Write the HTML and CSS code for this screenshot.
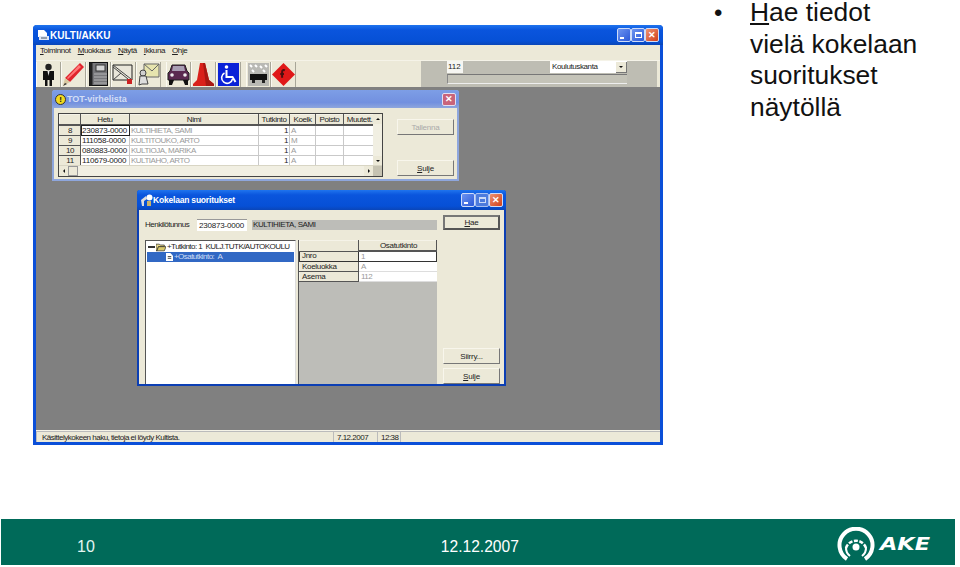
FILE: index.html
```html
<!DOCTYPE html>
<html>

<head>
  <meta charset="utf-8">
  <title>Hae tiedot</title>
  <link rel="stylesheet" href="styles.css">
</head>

<body>
  <div class="slide">
    <div class="content">
      <div class="app">
        <div class="titlebar">
          <svg class="title-icon" width="12" height="13" viewBox="0 0 12 13"><path d="M1 1h6l3 3v4H1z" fill="#fff"/><path d="M2 7h10v4H2z" fill="#dfe6f5"/><path d="M4 9h6" stroke="#456"/></svg>
          <span class="title-text">KULTI/AKKU</span>
          <div class="winbtns">
            <span class="winbtn"><i class="min"></i></span>
            <span class="winbtn"><i class="max"></i></span>
            <span class="winbtn close">✕</span>
          </div>
        </div>
        <div class="menubar">
          <span><u>T</u>oiminnot</span>
          <span><u>M</u>uokkaus</span>
          <span><u>N</u>äytä</span>
          <span><u>I</u>kkuna</span>
          <span><u>O</u>hje</span>
        </div>
        <div class="toolbar">
          <div class="tools">
            <!-- person -->
            <span class="tool"><svg width="23" height="25" viewBox="0 0 23 25"><circle cx="11.500" cy="5" r="3.200" fill="#222"/><path d="M6 9h11v9h-2v6h-2.500v-6h-2v6H8v-6H6z" fill="#111"/><path d="M10.500 9h2l-1 5z" fill="#eee"/></svg></span>
            <!-- pencil -->
            <span class="tool"><svg width="23" height="25" viewBox="0 0 23 25"><path d="M18 1l4 4L8 20l-5-4z" fill="#e0242c"/><path d="M3 16l5 4-7 4z" fill="#d8c8a0"/><path d="M1 24l2-3 2 1z" fill="#333"/><path d="M17 3l2 2L6 17l-1-1z" fill="#f77"/></svg></span>
            <!-- notebook -->
            <span class="tool"><svg width="23" height="25" viewBox="0 0 23 25"><rect x="2.500" y=".5" width="18" height="23" fill="#77777a" stroke="#111"/><rect x="2.500" y=".5" width="3" height="23" fill="#222"/><rect x="9" y="3" width="9" height="6" fill="#d4d4d4" stroke="#333"/><path d="M7 12h13M7 15h13M7 18h13M7 21h13" stroke="#b5b5b5"/></svg></span>
            <!-- letter -->
            <span class="tool"><svg width="23" height="25" viewBox="0 0 23 25"><path d="M1 3h19v15H1z" fill="#e9e6da" stroke="#222"/><path d="M1 3l18 14M1 5l15 12M1 18l8-7" fill="none" stroke="#444"/><path d="M15 17h5v5h-5z" fill="#c22"/></svg></span>
            <!-- mail with figure -->
            <span class="tool"><svg width="23" height="25" viewBox="0 0 23 25"><path d="M7 2h15v13H7z" fill="#e6e4ae" stroke="#666"/><path d="M7 2l8 7 7-7" fill="none" stroke="#666"/><circle cx="6" cy="11" r="3" fill="#cfcfcf" stroke="#444"/><path d="M3 14h6l2 8H5l-3 1z" fill="#ddd" stroke="#444"/></svg></span>
          </div>
          <div class="tools tools2">
            <!-- car -->
            <span class="tool"><svg width="23" height="25" viewBox="0 0 23 25"><path d="M5 3h13l2 6 2 2v7H1v-7l2-2z" fill="#5a2a50" stroke="#222"/><path d="M6 4h11l1 5H5z" fill="#a99fb4"/><path d="M2 18h5l-2 5H2zM16 18h5v5h-3z" fill="#111"/><circle cx="5" cy="13" r="1.800" fill="#eee"/><circle cx="18" cy="13" r="1.800" fill="#eee"/></svg></span>
            <!-- cone -->
            <span class="tool"><svg width="23" height="25" viewBox="0 0 23 25"><path d="M8 1h5l4 17 5 4v2H1v-2l4-4z" fill="#d9211a"/><path d="M11 1h2l4 17 5 4v2H14z" fill="#a81812"/></svg></span>
            <!-- wheelchair -->
            <span class="tool"><svg width="23" height="25" viewBox="0 0 23 25"><rect x="1" y="1" width="21" height="23" fill="#0a22d8"/><circle cx="9.500" cy="5" r="1.800" fill="#fff"/><path d="M9.500 8v7h6l3 5" fill="none" stroke="#fff" stroke-width="2"/><path d="M7.500 11a5.500 5.500 0 1 0 8 6" fill="none" stroke="#fff" stroke-width="1.600"/></svg></span>
          </div>
          <div class="tools tools3">
            <!-- truck -->
            <span class="tool"><svg width="23" height="25" viewBox="0 0 23 25"><rect x="1" y="1" width="21" height="23" fill="#b9b9b4"/><path d="M3 3l2 2M8 3l2 2M13 4l2 2M18 3l2 2M5 8l2 2M16 8l2 2" stroke="#fff" stroke-width="2"/><path d="M3 12h17v6H3z" fill="#111"/><path d="M5 18h3v3H5zM15 18h3v3h-3z" fill="#222"/></svg></span>
            <!-- diamond -->
            <span class="tool"><svg width="25" height="25" viewBox="0 0 25 25"><path d="M12.500 0L25 12.500 12.500 25 0 12.500z" fill="#e01818"/><path d="M14 8c-2-1-3 0-3 2v6M9 12h4" fill="none" stroke="#4a1010" stroke-width="2.200"/></svg></span>
          </div>
          <div class="panel">
            <div class="panel-row">
              <span class="num-input">112</span>
              <span class="combo">Koulutuskanta<b class="combo-btn"><i class="arrow-down"></i></b></span>
            </div>
            <div class="panel-bar"></div>
          </div>
        </div>
        <div class="mdi">
          <div class="child child-tot">
            <div class="child-title">
              <span class="warn">!</span>
              <span class="child-title-text">TOT-virhelista</span>
              <span class="child-close">✕</span>
            </div>
            <div class="child-body">
              <div class="gridbox">
                <table class="grid">
                  <tr>
                    <th class="c-no"></th>
                    <th class="c-hetu">Hetu</th>
                    <th class="c-nimi">Nimi</th>
                    <th class="c-tut">Tutkinto</th>
                    <th class="c-koe">Koelk</th>
                    <th class="c-poi">Poisto</th>
                    <th class="c-muu">Muutett.</th>
                  </tr>
                  <tr>
                    <th>8</th>
                    <td class="hetu sel">230873-0000</td>
                    <td class="dim">KULTIHIETA, SAMI</td>
                    <td class="right">1</td>
                    <td class="dim">A</td>
                    <td></td>
                    <td></td>
                  </tr>
                  <tr>
                    <th>9</th>
                    <td class="hetu">111058-0000</td>
                    <td class="dim">KULTITOUKO, ARTO</td>
                    <td class="right">1</td>
                    <td class="dim">M</td>
                    <td></td>
                    <td></td>
                  </tr>
                  <tr>
                    <th>10</th>
                    <td class="hetu">080883-0000</td>
                    <td class="dim">KULTIOJA, MARIKA</td>
                    <td class="right">1</td>
                    <td class="dim">A</td>
                    <td></td>
                    <td></td>
                  </tr>
                  <tr>
                    <th>11</th>
                    <td class="hetu">110679-0000</td>
                    <td class="dim">KULTIAHO, ARTO</td>
                    <td class="right">1</td>
                    <td class="dim">A</td>
                    <td></td>
                    <td></td>
                  </tr>
                </table>
                <div class="vscroll">
                  <span class="sbtn"><i class="arrow-up"></i></span>
                  <span class="strack"></span>
                  <span class="sbtn"><i class="arrow-down"></i></span>
                </div>
                <div class="hscroll">
                  <span class="sbtn"><i class="arrow-left"></i></span>
                  <span class="sthumb"></span>
                  <span class="strack"></span>
                  <span class="sbtn"><i class="arrow-right"></i></span>
                  <span class="scorner"></span>
                </div>
              </div>
              <div class="side-buttons">
                <span class="btn disabled">Tallenna</span>
                <span class="btn"><u>S</u>ulje</span>
              </div>
            </div>
          </div>

          <div class="child child-koe">
            <div class="child-title koe-title">
              <svg width="12" height="13" viewBox="0 0 12 13"><path d="M0 6l5-4 1 3-3 2v5H1z" fill="#ddd"/><circle cx="8.500" cy="3.500" r="3" fill="#fff"/><path d="M6 7h4v5H6z" fill="#c9b26a"/></svg>
              <span class="child-title-text">Kokelaan suoritukset</span>
              <div class="winbtns">
                <span class="winbtn"><i class="min"></i></span>
                <span class="winbtn faded"><i class="max"></i></span>
                <span class="winbtn close">✕</span>
              </div>
            </div>
            <div class="koe-body">
              <div class="koe-top">
                <span class="koe-label">Henkilötunnus</span>
                <span class="koe-hetu">230873-0000</span>
                <span class="koe-name">KULTIHIETA, SAMI</span>
                <span class="btn hae"><u>H</u>ae</span>
              </div>
              <div class="koe-main">
                <div class="tree">
                  <div class="tree-row">
                    <span class="tree-minus"></span>
                    <svg width="10" height="9" viewBox="0 0 12 10"><path d="M0 1h4l1 1h5v2H3L1 9H0z" fill="#e8d98a" stroke="#222" stroke-width=".8"/><path d="M3 4h9l-2 5H1z" fill="#d8c86a" stroke="#222" stroke-width=".8"/></svg>
                    <span>+Tutkinto: 1 &nbsp;KULJ.TUTK/AUTOKOULU</span>
                  </div>
                  <div class="tree-row selected">
                    <svg width="7" height="8" viewBox="0 0 8 9"><path d="M0 0h5l3 3v6H0z" fill="#fff"/><path d="M2 4h4M2 6h4" stroke="#333"/></svg>
                    <span>+Osatutkinto: &nbsp;A</span>
                  </div>
                </div>
                <div class="detail">
                  <table class="dgrid">
                    <tr>
                      <th class="d-head"></th>
                      <th class="d-col">Osatutkinto</th>
                    </tr>
                    <tr>
                      <th class="d-cur">Jnro</th>
                      <td class="dim cur">1</td>
                    </tr>
                    <tr>
                      <th>Koeluokka</th>
                      <td class="dim">A</td>
                    </tr>
                    <tr>
                      <th>Asema</th>
                      <td class="dim">112</td>
                    </tr>
                  </table>
                </div>
                <div class="koe-buttons">
                  <span class="btn">Siirry...</span>
                  <span class="btn"><u>S</u>ulje</span>
                </div>
              </div>
            </div>
          </div>
        </div>
        <div class="statusbar">
          <span class="st-msg">Käsittelykokeen haku, tietoja ei löydy Kultista.</span>
          <span class="st-date">7.12.2007</span>
          <span class="st-time">12:38</span>
          <span class="st-end"></span>
        </div>
      </div>
      <ul class="bullets">
        <li><span class="bullet-text">Hae tiedot vielä kokelaan suoritukset näytöllä</span></li>
      </ul>
    </div>
    <div class="footer">
      <span class="page-no">10</span>
      <span class="foot-date">12.12.2007</span>
      <div class="logo">
        <svg width="38" height="35" viewBox="0 0 38 35">
          <g fill="none" stroke="#fff">
            <path d="M10 32A16.500 16.500 0 1 1 28 32" stroke-width="4"/>
            <path d="M9 21A10.500 10.500 0 0 1 29 21" stroke-width="2.500" stroke-dasharray="4 1.500"/>
            <path d="M29 20A10.500 10.500 0 0 1 25 29M9 20A10.500 10.500 0 0 0 13 29" stroke-width="2"/>
          </g>
          <circle cx="19" cy="20" r="3.500" fill="#fff"/>
        </svg>
        <span class="logo-text">AKE</span>
      </div>
    </div>
  </div>
</body>

</html>
```

FILE: styles.css
```css
html, body {
  margin: 0;
  padding: 0;
  background: #fff;
}

.slide {
  width: 960px;
  height: 567px;
  display: flex;
  flex-direction: column;
  overflow: hidden;
  font-family: "Liberation Sans", Arial, sans-serif;
}

.content {
  height: 519px;
  display: flex;
  align-items: flex-start;
  padding-left: 33px;
  box-sizing: border-box;
}

/* main window */
.app {
  width: 630px;
  height: 420px;
  margin-top: 25px;
  box-sizing: border-box;
  border: 3px solid #0b4fd8;
  border-top: none;
  border-radius: 4px 4px 0 0;
  background: #ece9d8;
  display: flex;
  flex-direction: column;
  font-size: 8px;
  letter-spacing: -0.4px;
  color: #222;
}

.titlebar {
  height: 20px;
  margin: 0 -3px;
  padding: 0 4px 0 4px;
  display: flex;
  align-items: center;
  gap: 1px;
  color: #fff;
  font-weight: bold;
  font-size: 10px;
  border-radius: 4px 4px 0 0;
  background: linear-gradient(#1f74ee, #0a55dd 25%, #0650d6 80%, #0a46b8);
}

.title-icon {
  flex: none;
}

.title-text {
  flex: 1;
  letter-spacing: 0;
}

.winbtns {
  display: flex;
  gap: 0;
}

.winbtn {
  width: 14px;
  height: 14px;
  box-sizing: border-box;
  border: 1px solid #cfdcf8;
  border-radius: 2px;
  background: linear-gradient(135deg, #6d94f0, #2b59d8);
  display: flex;
  align-items: center;
  justify-content: center;
  color: #fff;
  font-size: 9px;
  line-height: 1;
  letter-spacing: 0;
}

.winbtn.close {
  background: linear-gradient(135deg, #ee9270, #d0401c);
}

.winbtn.faded {
  background: #5f86de;
  opacity: 0.8;
}

.min {
  width: 4px;
  height: 2px;
  background: #fff;
  margin: 6px 4px 0 0;
}

.max {
  width: 7px;
  height: 6px;
  box-sizing: border-box;
  border: 1px solid #fff;
  border-top-width: 2px;
}

.menubar {
  height: 15px;
  padding: 0 0 4px 4px;
  box-sizing: border-box;
  display: flex;
  gap: 7px;
  align-items: center;
}

.toolbar {
  height: 27px;
  display: flex;
  align-items: center;
  border-top: 1px solid #f5f3e8;
  box-sizing: border-box;
  background: #ece9d8;
}

.tools {
  display: flex;
  flex: none;
}

.tools2 {
  margin-left: 5px;
}

.tools3 {
  margin-left: 5px;
}

.tool {
  width: 25px;
  height: 25px;
  box-sizing: border-box;
  border-left: 1px solid #fbfaf2;
  border-right: 1px solid #a8a698;
  display: flex;
  align-items: center;
  justify-content: center;
}

.panel {
  margin-left: auto;
  margin-right: 3px;
  width: 236px;
  align-self: stretch;
  background: #bebdb3;
  padding: 0 30px 2px 26px;
  box-sizing: border-box;
  display: flex;
  flex-direction: column;
  gap: 1px;
}

.panel-row {
  display: flex;
  justify-content: space-between;
  height: 12px;
}

.num-input {
  width: 16px;
  padding-left: 1px;
  background: #f6f6f2;
  line-height: 12px;
  box-sizing: border-box;
  letter-spacing: 0;
}

.combo {
  width: 77px;
  background: #fff;
  padding-left: 2px;
  line-height: 12px;
  display: flex;
  justify-content: space-between;
  align-items: center;
  box-sizing: border-box;
}

.combo-btn {
  width: 11px;
  height: 11px;
  background: #ece9d8;
  border-right: 1px solid #777;
  border-bottom: 1px solid #777;
  box-sizing: border-box;
  display: flex;
  align-items: center;
  justify-content: center;
}

.panel-bar {
  height: 10px;
  background: #c4c3b8;
  border-top: 1px solid #777;
  border-bottom: 1px solid #eee;
  border-left: 1px solid #888;
  box-sizing: border-box;
}

.arrow-up, .arrow-down, .arrow-left, .arrow-right {
  width: 0;
  height: 0;
  display: block;
  border: 2.500px solid transparent;
}

.arrow-up {
  border-bottom-color: #111;
  border-top-width: 0;
}

.arrow-down {
  border-top-color: #111;
  border-bottom-width: 0;
}

.arrow-left {
  border-right-color: #111;
  border-left-width: 0;
}

.arrow-right {
  border-left-color: #111;
  border-right-width: 0;
}

.mdi {
  flex: 1;
  position: relative;
  background: #808080;
}

/* child windows sit on the mdi canvas */
.child {
  position: absolute;
  box-sizing: border-box;
  background: #ece9d8;
}

.child-tot {
  left: 16px;
  top: 3px;
  width: 407px;
  height: 91px;
  border: 2px solid #8ea6dd;
  border-top: none;
  border-radius: 3px 3px 0 0;
}

.child-koe {
  left: 101px;
  top: 103px;
  width: 369px;
  height: 196px;
  border: 2px solid #0c3fb4;
  border-top: none;
  border-radius: 3px 3px 0 0;
}

.child-title {
  height: 18px;
  margin: 0 -2px;
  padding: 0 3px 0 3px;
  display: flex;
  align-items: center;
  gap: 1px;
  color: #d3def5;
  font-size: 9px;
  font-weight: bold;
  letter-spacing: 0;
  border-radius: 3px 3px 0 0;
  background: linear-gradient(#7d9ee6, #7290df 70%, #8ea6dd);
}

.koe-title {
  height: 20px;
  padding-left: 4px;
  gap: 0;
  color: #fff;
  font-size: 8.500px;
  letter-spacing: -0.2px;
  background: linear-gradient(#1f74ee, #0a55dd 25%, #0650d6 80%, #0a46b8);
}

.child-title-text {
  flex: 1;
}

.warn {
  width: 11px;
  height: 11px;
  border-radius: 50%;
  background: #f2d820;
  border: 1px solid #333;
  box-sizing: border-box;
  color: #111;
  font-size: 8px;
  line-height: 9px;
  text-align: center;
}

.child-close {
  width: 14px;
  height: 13px;
  border-radius: 2px;
  background: #c9647a;
  border: 1px solid #e3dff0;
  box-sizing: border-box;
  color: #fff;
  font-size: 9px;
  line-height: 11px;
  text-align: center;
}

.child-body {
  display: flex;
  padding: 5px 3px 0 4px;
}

.gridbox {
  width: 325px;
  height: 64px;
  box-sizing: border-box;
  border: 1px solid #444;
  position: relative;
  overflow: hidden;
  background: #fff;
}

.grid {
  width: 314px;
  table-layout: fixed;
  border-collapse: collapse;
  font-size: 8px;
}

.grid th, .dgrid th {
  font-weight: normal;
  background: #ece9d8;
  border: 1px solid #555;
  border-top-color: #f5f3e8;
  border-left-color: #f5f3e8;
  padding: 0;
  height: 9px;
  line-height: 9px;
  overflow: hidden;
}

.grid td {
  padding: 0 1px;
  height: 9px;
  line-height: 9px;
  border: 1px solid #c9c9c9;
  white-space: nowrap;
  overflow: hidden;
}

.grid tr:first-child th {
  border-bottom: 2px solid #555;
}

.c-no { width: 20px; }
.c-hetu { width: 48px; }
.c-nimi { width: 128px; }
.c-tut { width: 30px; }
.c-koe { width: 25px; }
.c-poi { width: 27px; }
.c-muu { width: 31px; }

.hetu {
  color: #222;
  letter-spacing: -0.2px;
}

.sel {
  outline: 1px solid #222;
  outline-offset: -1px;
}

.dim {
  color: #9a9a9a;
  letter-spacing: -0.5px;
}

.right {
  text-align: right;
}

.vscroll {
  position: absolute;
  right: 0;
  top: 0;
  bottom: 10px;
  width: 9px;
  display: flex;
  flex-direction: column;
  background: #f1efe2;
}

.hscroll {
  position: absolute;
  left: 0;
  right: 0;
  bottom: 0;
  height: 11px;
  display: flex;
  background: #f1efe2;
  border-top: 1px solid #d8d5c4;
  box-sizing: border-box;
}

.sbtn {
  flex: none;
  width: 9px;
  height: 10px;
  background: #ece9d8;
  display: flex;
  align-items: center;
  justify-content: center;
}

.strack {
  flex: 1;
}

.sthumb {
  width: 10px;
  background: #ece9d8;
  border: 1px solid #999;
  box-sizing: border-box;
}

.scorner {
  width: 9px;
  background: #c6c3b2;
}

.side-buttons {
  margin-left: 14px;
  padding: 6px 0 1px;
  display: flex;
  flex-direction: column;
  justify-content: space-between;
  height: 64px;
  box-sizing: border-box;
}

.btn {
  width: 57px;
  height: 16px;
  box-sizing: border-box;
  background: #ece9d8;
  border: 1px solid #f8f6ec;
  border-right-color: #777;
  border-bottom-color: #777;
  display: flex;
  align-items: center;
  justify-content: center;
  letter-spacing: -0.2px;
}

.btn.disabled {
  color: #aaa;
}

.koe-body {
  height: 174px;
  display: flex;
  flex-direction: column;
  padding: 5px 4px 0 6px;
  box-sizing: border-box;
}

.koe-top {
  display: flex;
  align-items: flex-end;
  height: 16px;
  flex: none;
}

.koe-label {
  width: 52px;
  height: 12px;
  line-height: 12px;
  letter-spacing: -0.5px;
  white-space: nowrap;
}

.koe-hetu {
  width: 50px;
  height: 12px;
  margin-right: 5px;
  background: #fff;
  line-height: 12px;
  padding-left: 2px;
  box-sizing: border-box;
  border-top: 1px solid #999;
  letter-spacing: -0.2px;
  white-space: nowrap;
}

.koe-name {
  width: 185px;
  height: 10px;
  margin-bottom: 1px;
  background: #bdbdb8;
  line-height: 10px;
  padding-left: 1px;
  box-sizing: border-box;
}

.btn.hae {
  margin-left: auto;
  align-self: flex-start;
  border: 2px solid #555;
  border-top-color: #777;
  border-left-color: #777;
  height: 15px;
}

.koe-main {
  flex: 1;
  display: flex;
  margin-top: 9px;
}

.tree {
  width: 151px;
  box-sizing: border-box;
  background: #fff;
  border: 1px solid #555;
  border-right-color: #ddd;
  border-bottom: none;
  padding: 1px;
  flex: none;
}

.tree-row {
  height: 10px;
  line-height: 10px;
  display: flex;
  align-items: center;
  gap: 1px;
  white-space: nowrap;
  letter-spacing: -0.55px;
}

.tree-minus {
  width: 7px;
  height: 2px;
  background: #333;
  margin-left: 1px;
}

.tree-row.selected {
  background: #3168c4;
  color: #cfdcf4;
  padding-left: 19px;
  gap: 1px;
}

.detail {
  width: 139px;
  margin-left: 2px;
  background: #bdbdb8;
  border-left: 1px solid #555;
  box-sizing: border-box;
  flex: none;
}

.dgrid {
  width: 100%;
  table-layout: fixed;
  border-collapse: collapse;
  letter-spacing: -0.3px;
}

.dgrid th {
  text-align: left;
  padding-left: 2px;
  line-height: 8px;
}

.dgrid .d-head {
  width: 56px;
}

.dgrid .d-col {
  text-align: center;
  border-bottom: 2px solid #555;
}

.dgrid td {
  background: #fff;
  height: 9px;
  line-height: 9px;
  padding: 0 2px;
  border-bottom: 1px solid #ddd;
}

.dgrid .d-cur {
  border: 1px solid #333;
}

.dgrid .cur {
  border: 1px solid #333;
}

.koe-buttons {
  margin-left: 6px;
  width: 57px;
  flex: none;
  display: flex;
  flex-direction: column;
  justify-content: flex-end;
  gap: 4px;
}

.statusbar {
  height: 12px;
  display: flex;
  align-items: stretch;
  border-top: 1px solid #f5f3e8;
  box-sizing: border-box;
  letter-spacing: -0.5px;
  line-height: 11px;
  flex: none;
}

.statusbar span {
  box-sizing: border-box;
  border-left: 1px solid #bbb;
  border-top: 1px solid #bbb;
  padding-left: 3px;
}

.statusbar .st-msg {
  width: 297px;
  padding-left: 5px;
}

.st-date {
  width: 44px;
}

.st-time {
  width: 23px;
}

.st-end {
  flex: 1;
}

/* text beside the screenshot */
.bullets {
  margin: -3px 0 0 51px;
  padding: 0;
  width: 216px;
  font-size: 26.400px;
  line-height: 31.700px;
  color: #111;
  list-style: none;
}

.bullets li {
  display: flex;
}

.bullets li::before {
  content: "•";
  width: 36px;
  flex: none;
  font-size: 24px;
}

.bullet-text {
  display: block;
  flex: 1;
}

.bullet-text::first-letter {
  text-decoration: underline;
}

.footer {
  height: 46px;
  width: 954px;
  margin-left: 1px;
  background: #006a59;
  color: #fff;
  display: flex;
  align-items: center;
}

.page-no {
  margin-left: 76px;
  margin-top: 9px;
  font-size: 16px;
  color: #e4f6f2;
}

.foot-date {
  margin-left: 346px;
  margin-top: 9px;
  font-size: 15.600px;
}

.logo {
  margin-left: auto;
  margin-right: 24px;
  margin-top: 4px;
  display: flex;
  align-items: center;
  gap: 5px;
}

.logo-text {
  width: 51px;
  font-family: "DejaVu Sans", sans-serif;
  font-size: 17px;
  font-weight: bold;
  font-style: italic;
  transform: scaleX(1.32);
  transform-origin: left center;
}
```
